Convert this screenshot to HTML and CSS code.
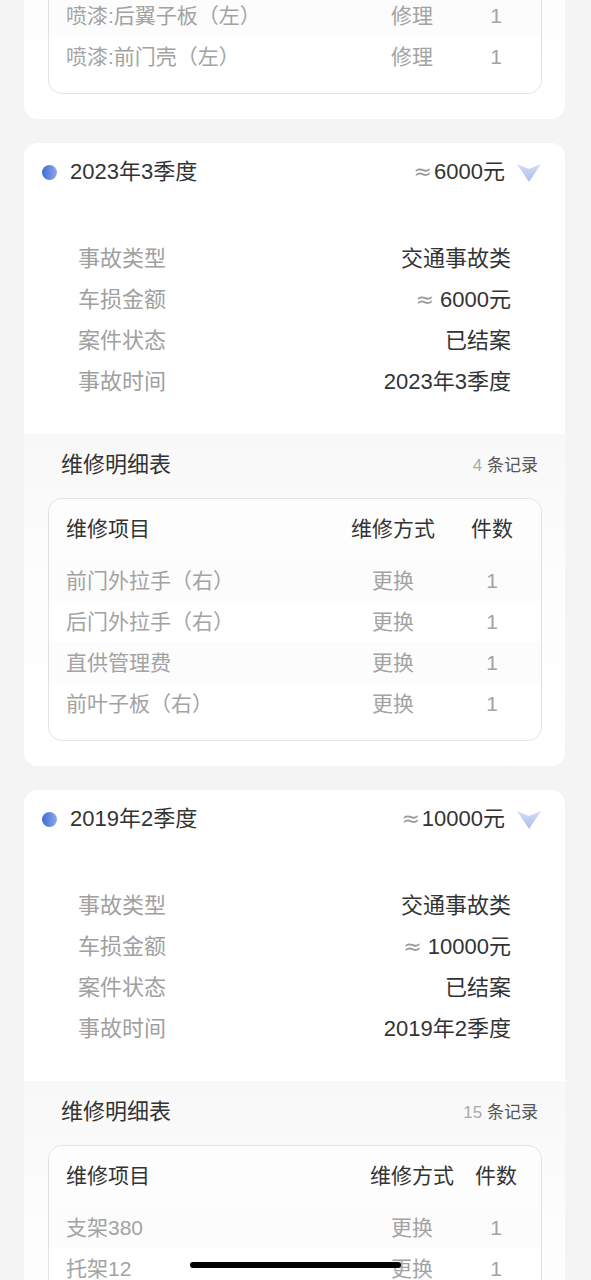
FILE: index.html
```html
<!DOCTYPE html>
<html lang="zh-CN">

<head>
  <meta charset="UTF-8">
  <title>出险记录</title>
  <link rel="stylesheet" href="styles.css">
</head>

<body>
  <div class="list">

    <!-- previous record, scrolled mostly out of view -->
    <div class="card card-cut">
      <div class="repair">
        <div class="repair-head">
          <span class="repair-title">维修明细表</span>
          <span class="repair-count"><em>6</em> 条记录</span>
        </div>
        <div class="table cols-b">
          <div class="tr th"><span>维修项目</span><span>维修方式</span><span>件数</span></div>
          <div class="tr"><span>喷漆:后翼子板（左）</span><span>修理</span><span>1</span></div>
          <div class="tr"><span>喷漆:前门壳（左）</span><span>修理</span><span>1</span></div>
        </div>
      </div>
    </div>

    <div class="card">
      <div class="card-head">
        <span class="dot"></span>
        <span class="card-title">2023年3季度</span>
        <span class="card-amount"><i>≈</i>6000元</span>
        <svg class="chevron" viewBox="0 0 24 18" width="24" height="18">
          <defs>
            <linearGradient id="chev1" x1="0" y1="0" x2="0" y2="1">
              <stop offset="0" stop-color="#d3def6" />
              <stop offset="1" stop-color="#a9bfec" />
            </linearGradient>
          </defs>
          <path d="M0 0 L12 5 L24 0 L12 18 Z" fill="url(#chev1)" />
        </svg>
      </div>
      <div class="info">
        <div class="info-row"><span class="label">事故类型</span><span class="value">交通事故类</span></div>
        <div class="info-row"><span class="label">车损金额</span><span class="value"><i>≈</i> 6000元</span></div>
        <div class="info-row"><span class="label">案件状态</span><span class="value">已结案</span></div>
        <div class="info-row"><span class="label">事故时间</span><span class="value">2023年3季度</span></div>
      </div>
      <div class="repair">
        <div class="repair-head">
          <span class="repair-title">维修明细表</span>
          <span class="repair-count"><em>4</em> 条记录</span>
        </div>
        <div class="table cols-a">
          <div class="tr th"><span>维修项目</span><span>维修方式</span><span>件数</span></div>
          <div class="tr"><span>前门外拉手（右）</span><span>更换</span><span>1</span></div>
          <div class="tr"><span>后门外拉手（右）</span><span>更换</span><span>1</span></div>
          <div class="tr"><span>直供管理费</span><span>更换</span><span>1</span></div>
          <div class="tr"><span>前叶子板（右）</span><span>更换</span><span>1</span></div>
        </div>
      </div>
    </div>

    <div class="card">
      <div class="card-head">
        <span class="dot"></span>
        <span class="card-title">2019年2季度</span>
        <span class="card-amount"><i>≈</i>10000元</span>
        <svg class="chevron" viewBox="0 0 24 18" width="24" height="18">
          <defs>
            <linearGradient id="chev2" x1="0" y1="0" x2="0" y2="1">
              <stop offset="0" stop-color="#d3def6" />
              <stop offset="1" stop-color="#a9bfec" />
            </linearGradient>
          </defs>
          <path d="M0 0 L12 5 L24 0 L12 18 Z" fill="url(#chev2)" />
        </svg>
      </div>
      <div class="info">
        <div class="info-row"><span class="label">事故类型</span><span class="value">交通事故类</span></div>
        <div class="info-row"><span class="label">车损金额</span><span class="value"><i>≈</i> 10000元</span></div>
        <div class="info-row"><span class="label">案件状态</span><span class="value">已结案</span></div>
        <div class="info-row"><span class="label">事故时间</span><span class="value">2019年2季度</span></div>
      </div>
      <div class="repair">
        <div class="repair-head">
          <span class="repair-title">维修明细表</span>
          <span class="repair-count"><em>15</em> 条记录</span>
        </div>
        <div class="table cols-b">
          <div class="tr th"><span>维修项目</span><span>维修方式</span><span>件数</span></div>
          <div class="tr"><span>支架380</span><span>更换</span><span>1</span></div>
          <div class="tr"><span>托架12</span><span>更换</span><span>1</span></div>
          <div class="tr"><span>前保险杠皮</span><span>更换</span><span>1</span></div>
          <div class="tr"><span>前大灯（右）</span><span>更换</span><span>1</span></div>
        </div>
      </div>
    </div>

  </div>

  <div class="home-bar"></div>
</body>

</html>
```

FILE: styles.css
```css
html,
body {
  margin: 0;
  background: #f4f4f4;
  font-family: "Liberation Sans", "Noto Sans CJK SC", sans-serif;
  color: #333;
  overflow: hidden;
  height: 1280px;
}

i,
em {
  font-style: normal;
}

.list {
  padding: 0 26px 0 24px;
}

.card {
  background: #fff;
  border-radius: 14px;
  overflow: hidden;
  margin-bottom: 24px;
}

.card-cut {
  margin-top: -131px;
}

.card-head {
  display: flex;
  align-items: center;
  height: 57px;
  padding: 0 24px 0 18px;
}

.dot {
  width: 15px;
  height: 15px;
  border-radius: 50%;
  background: linear-gradient(90deg, #3f6bd6, #8ea9ea);
  margin-right: 13px;
  margin-top: 1px;
}

.card-title {
  flex: 1;
  font-size: 22px;
  line-height: 28px;
}

.card-amount {
  font-size: 22px;
  line-height: 28px;
  margin-right: 12px;
}

.card-amount i,
.value i {
  color: #999;
  font-family: "DejaVu Sans", sans-serif;
  margin-right: 2px;
}

.value i {
  margin-right: 0;
}

.chevron {
  display: block;
  margin-top: 2px;
}

.info {
  padding: 38px 54px 32px;
}

.info-row {
  display: flex;
  justify-content: space-between;
  align-items: center;
  height: 41px;
  font-size: 22px;
  line-height: 28px;
}

.label {
  color: #a0a0a0;
}

.value {
  color: #333;
}

.repair {
  background: linear-gradient(#f8f8f8, #fdfdfd 45%, #fff);
  padding: 17px 23px 25px 24px;
}

.repair-head {
  display: flex;
  justify-content: space-between;
  align-items: center;
  height: 28px;
  padding: 0 4px 0 13px;
}

.repair-title {
  font-size: 22px;
  line-height: 28px;
}

.repair-count {
  font-size: 17px;
  line-height: 22px;
  color: #555;
  margin-top: 2px;
}

.repair-count em {
  color: #aaa;
}

.table {
  margin-top: 19px;
  background: #fff;
  border: 1px solid #e2e2e2;
  border-radius: 14px;
  padding-bottom: 16px;
}

.tr {
  display: grid;
  align-items: center;
  height: 41px;
  padding: 0 17px;
  font-size: 21px;
  line-height: 26px;
  color: #a3a3a3;
}

.tr span:nth-child(2),
.tr span:nth-child(3) {
  text-align: center;
}

.tr.th {
  height: 59px;
  padding-bottom: 2px;
  color: #333;
  background: #fdfdfd;
  border-radius: 14px 14px 0 0;
}

.tr:nth-child(even) {
  background: #fcfcfc;
}

.cols-a .tr {
  grid-template-columns: 1fr 134px 64px;
}

.cols-b .tr {
  grid-template-columns: 1fr 112px 56px;
}

.home-bar {
  position: fixed;
  left: 190px;
  bottom: 12px;
  width: 211px;
  height: 6px;
  border-radius: 3px;
  background: #000;
}
```
